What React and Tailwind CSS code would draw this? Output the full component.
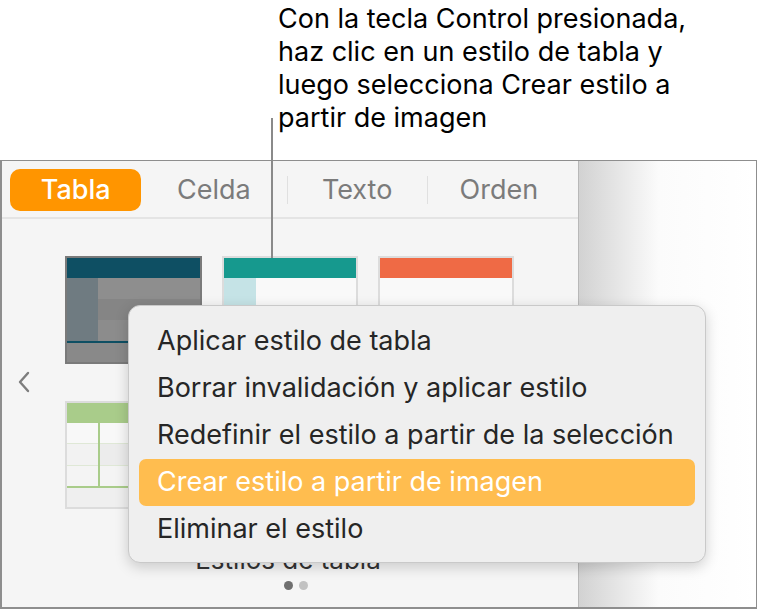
import React from 'react';

const font = { fontFamily: 'Inter, "Noto Sans", sans-serif' };

const menuItems = [
  'Aplicar estilo de tabla',
  'Borrar invalidación y aplicar estilo',
  'Redefinir el estilo a partir de la selección',
  'Crear estilo a partir de imagen',
  'Eliminar el estilo',
];

function DarkThumb() {
  return (
    <div className="w-[137px] h-[108px] border-2 border-[#7a7a7a] bg-[#8a8a8a] flex flex-col">
      <div className="h-[20px] bg-[#0e4f63]" />
      <div className="flex-1 flex">
        <div className="w-[31px] bg-[#6f7b81]" />
        <div className="flex-1 flex flex-col">
          <div className="flex-1 bg-[#8e8e8e]" />
          <div className="flex-1 bg-[#858585]" />
          <div className="flex-1 bg-[#8c8c8c]" />
        </div>
      </div>
      <div className="h-[2px] bg-[#0e4f63]" />
      <div className="h-[19px] bg-[#898989]" />
    </div>
  );
}

function LightThumb({ header, accent }) {
  return (
    <div className="w-[136px] h-[108px] border-2 border-[#dcdcdc] bg-[#f7f7f7] flex flex-col">
      <div className="h-[20px]" style={{ backgroundColor: header }} />
      <div className="flex-1 flex">
        {accent && <div className="w-[32px]" style={{ backgroundColor: accent }} />}
        <div className="flex-1 flex flex-col">
          <div className="flex-1 bg-[#f9f9f9]" />
          <div className="flex-1 bg-[#eeeeee]" />
          <div className="flex-1 bg-[#f6f6f6]" />
        </div>
      </div>
    </div>
  );
}

function GreenThumb() {
  return (
    <div className="w-[137px] h-[108px] border-2 border-[#dcdcdc] bg-[#f7f7f7] flex flex-col">
      <div className="h-[20px] bg-[#a9cc8a]" />
      <div className="flex-1 flex">
        <div className="w-[31px] flex flex-col">
          <div className="flex-1 bg-[#f8f8f8] border-b border-[#dfe8d6]" />
          <div className="flex-1 bg-[#f2f2f2] border-b border-[#dfe8d6]" />
          <div className="flex-1 bg-[#f4f4f4]" />
        </div>
        <div className="w-[2px] bg-[#a9cc8a]" />
        <div className="flex-1 flex flex-col">
          <div className="flex-1 bg-[#f8f8f8] border-b border-[#dfe8d6]" />
          <div className="flex-1 bg-[#ececec] border-b border-[#dfe8d6]" />
          <div className="flex-1 bg-[#f4f4f4]" />
        </div>
      </div>
      <div className="h-[2px] bg-[#a9cc8a]" />
      <div className="h-[19px] bg-[#efefef]" />
    </div>
  );
}

export default function App() {
  return (
    <div className="relative w-[758px] h-[609px] bg-white overflow-hidden flex flex-col" style={font}>
      {/* callout */}
      <div className="h-[160px] pl-[278px] pt-[2px] text-[27px] leading-[33px] text-black">
        <p>Con la tecla Control presionada,</p>
        <p>haz clic en un estilo de tabla y</p>
        <p>luego selecciona Crear estilo a</p>
        <p>partir de imagen</p>
      </div>

      {/* window frame */}
      <div className="flex-1 flex border-t border-l-2 border-r border-b-2 border-[#8e8e8e] mr-[1px]">
        <div className="w-[577px] bg-[#f5f5f5] border-r border-[#b8b8b8] flex flex-col">
          {/* tabs */}
          <div className="h-[58px] pt-[2px] border-b-2 border-[#e4e4e4] flex items-center px-[8px]">
            <div className="w-[132px] h-[42px] rounded-[10px] bg-[#ff9500] text-white text-[27px] font-medium flex items-center justify-center">
              Tabla
            </div>
            <div className="w-[146px] text-center text-[27px] text-[#7b7b7b]">Celda</div>
            <div className="w-[1px] h-[28px] bg-[#e0e0e0]" />
            <div className="w-[140px] text-center text-[27px] text-[#7b7b7b]">Texto</div>
            <div className="w-[1px] h-[28px] bg-[#e0e0e0]" />
            <div className="w-[143px] text-center text-[27px] text-[#7b7b7b]">Orden</div>
          </div>

          {/* styles */}
          <div className="flex-1 flex pt-[37px]">
            <div className="w-[63px] flex items-start justify-center pt-[115px] pr-[20px]">
              <svg width="14" height="22" viewBox="0 0 14 22" fill="none">
                <path d="M11 2 L3 11 L11 20" stroke="#7d7d7d" strokeWidth="2.4" strokeLinecap="round" strokeLinejoin="round" />
              </svg>
            </div>
            <div className="grid grid-cols-[137px_136px_136px] gap-x-[20px] gap-y-[37px] content-start">
              <DarkThumb />
              <LightThumb header="#16998e" accent="#c5e3e6" />
              <LightThumb header="#ef6a45" />
              <GreenThumb />
              <LightThumb header="#d0d0d0" />
              <LightThumb header="#d0d0d0" />
            </div>
          </div>
          <div className="h-[68px] pt-[7px] flex flex-col items-center">
            <p className="text-[26px] leading-[28px] text-[#333] -translate-x-[2px]">Estilos de tabla</p>
            <div className="flex gap-[6px] mt-[7px] translate-x-[6px]">
              <span className="w-[9px] h-[9px] rounded-full bg-[#6f6f6f]" />
              <span className="w-[9px] h-[9px] rounded-full bg-[#c2c2c2]" />
            </div>
          </div>
        </div>
        <div className="flex-1 bg-gradient-to-r from-[#d2d2d2] via-[#fbfbfb] via-45% to-white" />
      </div>

      {/* callout line */}
      <div className="absolute left-[271px] top-[118px] w-[2px] h-[140px] bg-[#8a8a8a]" />

      {/* context menu */}
      <div className="absolute left-[128px] top-[305px] w-[578px] h-[258px] rounded-[12px] bg-[#efefef] border border-[#c9c9c9] shadow-[0_4px_14px_rgba(0,0,0,0.18)] px-[10px] pt-[12px] text-[27px] text-[#262626]">
        {menuItems.map((item, i) => (
          <div
            key={item}
            className={
              'h-[47px] flex items-center pl-[18px] rounded-[7px] ' +
              (i === 3 ? 'bg-[#ffbd4f] text-white' : '')
            }
          >
            {item}
          </div>
        ))}
      </div>
    </div>
  );
}
